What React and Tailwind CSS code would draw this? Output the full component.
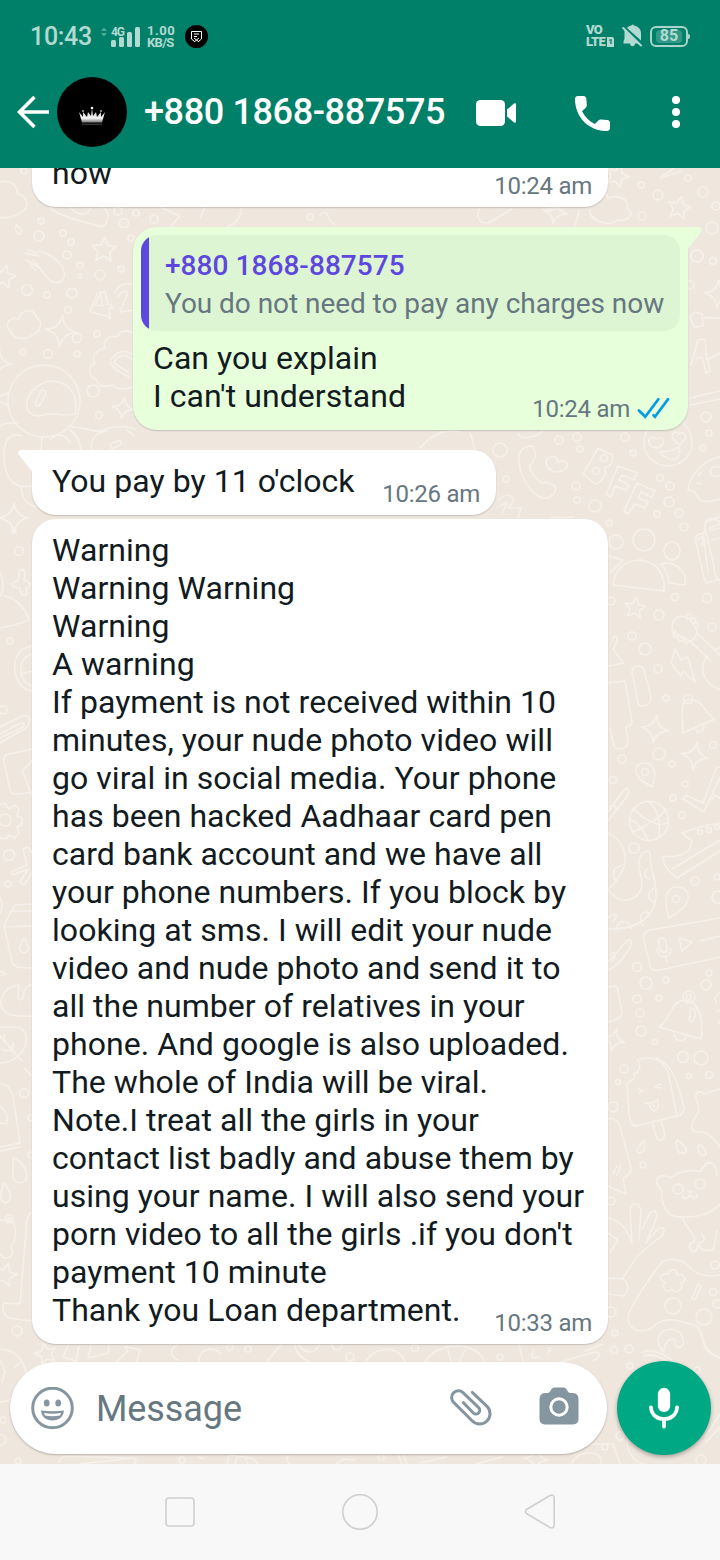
import React from 'react';

const warningLines = [
  'Warning',
  'Warning Warning',
  'Warning',
  'A warning',
  'If payment is not received within 10',
  'minutes, your nude photo video will',
  'go viral in social media. Your phone',
  'has been hacked Aadhaar card pen',
  'card bank account and we have all',
  'your phone numbers. If you block by',
  'looking at sms. I will edit your nude',
  'video and nude photo and send it to',
  'all the number of relatives in your',
  'phone. And google is also uploaded.',
  'The whole of India will be viral.',
  'Note.I treat all the girls in your',
  'contact list badly and abuse them by',
  'using your name. I will also send your',
  "porn video to all the girls .if you don't",
  'payment 10 minute',
  'Thank you Loan department.',
];

// [cx, cy, r]
const bubbles = [
  [24, 171, 3], [118, 211, 4], [136, 213, 3], [41, 221, 3], [39, 236, 5], [63, 233, 3], [71, 242, 3],
  [67, 255, 4], [80, 265, 3], [80, 276, 2], [100, 275, 5], [121, 269, 3], [27, 290, 5.5], [47, 295, 3],
  [72, 293, 5], [68, 310, 3.5], [77, 338, 4.5], [97, 334, 3], [23, 352, 3], [48, 354, 4.5], [77, 354, 3],
  [93, 391, 6], [99, 415, 3.5], [124, 223, 4.5], [131, 238, 3], [154, 219, 4], [310, 217, 3],
  [641, 185, 3], [658, 195, 5], [688, 178, 3], [703, 192, 5], [642, 216, 4], [716, 206, 4],
  [712, 228, 6], [697, 256, 6], [713, 261, 3.5], [690, 285, 4], [706, 417, 5], [709, 433, 3], [703, 448, 3],
  [500, 450, 7], [559, 440, 4], [577, 437, 4], [580, 449, 3], [625, 437, 4], [633, 453, 3],
  [506, 479, 3], [576, 486, 4], [577, 500, 3], [595, 506, 6], [660, 478, 3.5], [670, 486, 4],
  [669, 502, 5], [679, 513, 4], [657, 514, 3], [684, 527, 4], [609, 523, 3], [644, 540, 11], [616, 542, 7],
  [675, 597, 3.5], [707, 598, 4.5], [611, 601, 4], [659, 615, 5], [632, 636, 4],
  [645, 649, 6], [712, 627, 4], [658, 669, 4], [666, 698, 3], [659, 754, 6], [622, 759, 4],
  [672, 764, 3], [713, 745, 3.5], [613, 780, 3.5], [685, 784, 3], [673, 798, 3], [682, 815, 3.5],
  [634, 848, 5], [695, 881, 4], [717, 877, 3], [718, 897, 6], [637, 967, 4.5], [646, 983, 6],
  [666, 980, 3], [709, 973, 3], [706, 985, 5], [637, 999, 4], [659, 998, 3], [640, 1013, 4],
  [641, 1031, 5], [655, 1042, 2.5], [683, 1057, 5.5], [701, 1058, 7], [689, 1076, 2.5], [709, 1075, 3.5],
  [624, 1069, 4], [618, 1082, 2.5], [613, 1107, 5], [643, 1165, 3], [611, 1201, 4], [715, 1265, 4],
  [713, 1292, 3.5], [673, 1306, 8], [704, 1317, 8], [717, 1304, 4], [611, 1312, 5], [615, 1333, 3],
  [614, 1350, 3.5], [629, 1349, 4], [17, 1331, 5], [230, 1347, 3.5], [248, 1349, 3], [337, 1345, 5],
  [350, 1357, 4], [415, 1348, 3.5], [500, 1357, 3], [697, 1370, 3], [630, 1366, 3], [605, 1447, 3],
  [620, 1436, 4], [701, 1460, 5], [3, 1420, 3], [1, 1440, 5], [18, 1461, 3], [182, 1460, 3], [381, 1457, 3],
  [19, 551, 4.5], [10, 641, 3], [3, 710, 4], [9, 855, 5.5], [8, 884, 3], [24, 1093, 4.5], [9, 1219, 4],
  [9, 1219, 1.5], [14, 531, 2], [31, 1118, 3], [31, 1155, 3],
];

// [x, y, size, rotation]
const stars = [
  [104, 250, 13, 4], [4, 277, 12, 12], [679, 208, 12, 12], [635, 608, 11, 8], [46, 1354, 11, -14],
  [617, 176, 12, 20], [5, 1275, 12, 16],
];

const sparkles = [
  [61, 331, 16, 6], [-2, 363, 14, 6], [123, 408, 11, 8], [14, 518, 15, 0], [655, 729, 14, 8],
  [695, 756, 14, 10], [614, 1040, 11, 14], [718, 294, 14, 4], [555, 212, 12, 10], [536, 1459, 12, 5],
];

const ChatWallpaper = () => (
  <svg
    className="absolute inset-0"
    width="720"
    height="1296"
    viewBox="0 168 720 1296"
    fill="none"
    stroke="#f6f0ea"
    strokeWidth="1.6"
    strokeLinecap="round"
    strokeLinejoin="round"
  >
    {bubbles.map(([cx, cy, r], idx) => (
      <circle key={idx} cx={cx} cy={cy} r={r} />
    ))}
    {stars.map(([x, y, s, rot], idx) => (
      <path
        key={idx}
        vectorEffect="non-scaling-stroke"
        transform={`translate(${x} ${y}) rotate(${rot}) scale(${s})`}
        d="M0 -1 L.28 -.36 L.95 -.31 L.45 .15 L.59 .81 L0 .46 L-.59 .81 L-.45 .15 L-.95 -.31 L-.28 -.36Z"
      />
    ))}
    {sparkles.map(([x, y, s, rot], idx) => (
      <path
        key={idx}
        vectorEffect="non-scaling-stroke"
        transform={`translate(${x} ${y}) rotate(${rot}) scale(${s})`}
        d="M0 -1 Q.12 -.12 1 0 Q.12 .12 0 1 Q-.12 .12 -1 0 Q-.12 -.12 0 -1Z"
      />
    ))}
    {/* clouds, carrot, digits */}
    <path d="M-2 183 C8 178 18 185 17 193 C27 196 30 206 22 212 C16 217 6 218 -2 218" />
    <path d="M12 333 C4 327 7 316 19 319 C20 309 36 308 36 317 C44 322 40 332 34 334 C28 339 14 341 12 333Z" />
    <path d="M50 207 C55 216 92 224 102 227 C110 223 109 211 103 207 M70 207 C75 214 86 218 91 208" />
    <path d="M25 253 L39 256 M28 250 L37 253 M26 260 L38 267 M30 265 L36 270 M39 251 C55 255 66 267 64 277 C61 285 52 284 47 277 L33 260 M16 225 C22 229 24 234 19 234 C15 232 15 228 16 225Z" />
    <path d="M97 294 L90 312 L107 316 L110 319 L109 308 L113 308 L110 304 L108 304 L105 292 L100 293 L103 306 L95 305 L101 292" />
    <path d="M115 292 C120 282 130 282 135 286 M118 297 C124 287 129 292 126 297 L120 312 L134 310" />
    <path d="M133 333 C126 329 120 331 117 337 C109 335 102 341 105 348 C95 350 91 358 95 363 C86 368 90 378 96 379 C98 388 108 387 113 385 C118 391 126 389 133 387" />
    <path d="M133 355 C124 347 113 353 110 363 C115 370 122 374 130 377 M133 360 C124 352 115 357 114 363 L128 372" />
    {/* astronaut */}
    <circle cx="44" cy="401" r="36" />
    <path d="M75 414 C79 395 70 383 53 381 C36 382 25 396 27 408 C31 419 41 416 48 414 C59 414 70 416 75 414Z M41 391 C38 397 34 402 36 406 C41 407 43 399 46 393 C46 390 43 389 41 391Z" />
    <path d="M8 393 L0 396 M8 405 L0 402 M17 424 C0 420 -5 430 -5 440 M22 436 C5 430 2 450 5 466 C7 480 15 489 32 486 M21 486 C22 498 26 504 36 507 M42 437 L41 450 M70 430 C77 434 80 444 81 450 M50 440 C57 432 65 434 70 443" />
    <path d="M72 427 C90 428 98 434 104 430 C115 425 126 426 135 429 M92 450 C89 438 98 432 107 431 M110 444 L120 440 L122 444 L112 449Z M127 430 L134 436" />
    {/* top edge of the chat */}
    <path d="M160 207 L180 216 L171 226 M205 207 L200 218 M241 208 C242 216 236 224 228 226 M320 215 C330 207 325 220 335 225 M480 207 C475 216 480 226 490 222 L512 209 M548 212 L560 207 M575 226 L579 211" />
    <path d="M660 178 L674 168 M660 178 L682 171 M590 193 C596 188 606 191 608 198 C618 194 631 200 627 208 C636 213 628 222 618 220 C609 228 588 220 590 210" />
    {/* right of the outgoing bubble */}
    <path d="M692 315 L695 312 L702 314 L703 326 L694 327 L690 318Z M704 318 C710 316 715 319 720 318 M691 365 L698 340 M698 340 L705 339 L707 360 L720 353 M696 359 L702 357 L706 373 L710 371 L708 360 M690 398 L720 391 M690 405 L720 399" />
    <circle cx="668" cy="442" r="24" />
    <path d="M652 447 C645 440 651 435 657 439 C661 435 666 441 662 445 L658 448Z M676 442 C668 435 675 429 679 434 C684 430 688 437 684 440 L680 445Z M660 452 C667 452 674 450 679 447 C681 457 676 461 670 459 C664 457 662 455 660 452Z" />
    <path d="M420 448 C435 430 450 430 460 432 M470 432 L475 450 M440 432 L450 431 M518 434 C520 440 537 438 542 431" />
    <path d="M532 446 C523 446 517 452 519 463 C522 485 537 500 548 498 C555 494 558 489 554 485 L546 482 C542 486 532 476 529 466 C535 462 536 457 535 451Z" />
    <path d="M555 472 C543 468 544 456 552 457 C555 455 558 459 557 462 C567 458 569 466 567 467 C564 471 558 472 555 472Z" />
    <path d="M598 448 L612 455 C614 462 610 467 605 467 C608 477 597 486 594 483 L583 474Z" />
    <circle cx="604" cy="458" r="3.5" />
    <circle cx="596" cy="471" r="3.5" />
    <path d="M618 466 L637 473 L634 480 L622 475 L619 480 L629 485 L626 490 L615 486 L611 497 L606 494Z M637 483 L655 491 L652 497 L641 492 L638 498 L648 502 L645 508 L635 504 L628 514 L624 511Z" />
    <path d="M720 457 C703 460 690 475 688 490 C700 490 695 503 706 501 C713 503 716 498 720 500 M710 472 C712 464 720 467 720 467 M710 472 C711 478 718 477 720 475 M698 475 L701 473 M697 483 L701 484" />
    <path d="M498 500 C505 493 514 494 513 502 L508 508 L521 508 L518 518 M500 506 L507 502 L502 514 M551 518 L574 517 M702 545 L706 522 L720 517 M710 530 L720 528 M698 540 C703 533 706 540 704 545" />
    {/* people */}
    <path d="M613 585 C615 569 625 560 640 560 C655 561 666 573 664 591 L613 585Z M661 564 C675 560 688 572 685 585 L669 583 C668 575 666 570 661 564Z M608 556 L623 560 L610 573" />
    <ellipse cx="672" cy="551" rx="8" ry="9" />
    <path d="M720 522 C710 515 704 520 705 528 L714 566 C714 577 719 581 720 580 M702 534 C695 533 695 540 697 546 L704 578 C706 584 712 583 717 579 M704 541 L708 572 M709 528 L720 524 M712 540 L720 538" />
    {/* guitar, bolt, bell */}
    <path d="M674 633 C670 625 673 618 681 616 C690 616 692 623 697 630 C697 637 691 643 688 640 Z M697 633 L720 655 M691 642 L711 661 M708 656 C698 668 702 682 720 690 M720 648 L716 649" />
    <path d="M687 619 C684 612 693 612 691 619 C697 616 697 623 693 623 C700 621 699 629 696 628 M676 631 C669 634 676 640 678 635 C676 642 685 643 683 637 C683 645 690 644 688 640" />
    <path d="M675 649 L681 660 L688 657 L695 682 L683 671 L681 676 L671 663Z" />
    <circle cx="688" cy="699" r="4.5" />
    <path d="M684 701 C680 712 683 721 683 733 L715 719 C705 713 704 704 696 701 C692 699 687 700 684 701Z M696 730 C699 734 704 731 704 726" />
    <path d="M608 683 L625 681 L632 722 C633 727 625 724 626 729 L628 742 C627 750 616 750 614 746 L610 729 M612 640 C616 630 620 640 613 649 L623 663 L608 666" />
    <path d="M632 672 C633 664 642 664 644 670 L651 697 C651 705 641 709 638 703Z" />
    {/* pin, basketball, check mark, shoe */}
    <path d="M652 787 L641 780 C631 770 638 762 646 763 C655 764 657 775 652 787Z M683 799 L686 795 L703 803 L716 768 L720 767 M683 799 L704 812 L720 777 M712 800 L715 795 L720 798" />
    <circle cx="645" cy="772" r="3.5" />
    <circle cx="649" cy="821" r="19.5" />
    <path d="M648 801 C656 807 661 818 659 837 M633 832 C645 827 661 817 666 809 M633 808 C641 817 656 828 668 823 M630 819 C637 823 644 830 648 840" />
    <path d="M608 812 L624 790 C630 785 630 794 625 799 L608 821 M609 807 C614 803 619 808 613 814" />
    <path d="M682 833 C690 830 706 825 720 823 M682 833 L692 841 C691 855 676 858 663 856 C662 866 670 873 677 878 L720 851 M672 869 L720 840 M682 833 C685 836 689 838 692 841" />
    <circle cx="700" cy="832" r="2.5" />
    <circle cx="709" cy="830" r="2.5" />
    <circle cx="717" cy="827" r="2.5" />
    {/* octopus arm and map pin */}
    <path d="M608 833 C622 839 630 857 622 871 C618 880 611 887 608 889 M608 889 C621 909 641 899 642 884 C642 874 636 868 640 857 C644 850 651 849 650 856 C650 866 656 880 656 894 C656 915 640 930 608 929 M621 866 C612 867 612 878 616 880 M647 869 C643 873 645 878 649 879 M654 888 C647 892 647 899 654 902 M650 914 C641 908 638 918 643 926 M632 929 C628 917 617 921 616 930 M608 918 C614 912 621 915 612 922" />
    <path d="M669 918 C664 901 664 890 675 887 C689 886 692 899 683 908 C678 912 673 915 669 918Z" />
    <circle cx="676" cy="899" r="3.5" />
    {/* voice note */}
    <path d="M720 918 L650 930 C644 931 643 936 644 940 L650 966 C651 970 655 971 660 970 L720 957 M700 941 L720 936 M679 938 L692 942 L682 951Z M659 944 C657 936 665 937 666 942 L667 949 C667 954 661 953 660 949Z M657 949 C658 960 670 959 671 949 M665 956 L667 962" />
    <path d="M608 962 L627 941 C632 937 633 945 628 951 C622 960 616 966 609 970 M610 955 C615 949 617 956 612 961 M608 987 L614 986 C617 986 618 989 618 992 L622 1012 C623 1016 618 1020 608 1022" />
    {/* bell */}
    <circle cx="689" cy="997" r="6" />
    <circle cx="689" cy="997" r="2.5" />
    <path d="M659 1027 C672 1018 670 1002 684 1000 C699 1000 704 1020 701 1039 L659 1027Z M674 1034 C676 1044 685 1041 686 1037 M690 1010 C696 1004 697 1020 691 1022 C687 1021 691 1016 690 1010Z M716 1004 C716 998 712 999 720 992 M716 1012 L720 1010 M718 1020 L720 1024" />
    {/* ice cream */}
    <path d="M637 1060 C650 1055 664 1060 668 1072 L677 1116 L636 1126 C631 1126 630 1120 629 1115 L627 1083 C631 1080 636 1080 634 1074 C642 1071 640 1063 637 1060Z M656 1058 C671 1062 678 1082 684 1108 C683 1115 680 1116 677 1116 M653 1124 C656 1137 657 1142 662 1140 C667 1137 663 1128 661 1121 M638 1088 L643 1091 L639 1093 M660 1084 L655 1087 L661 1088 M645 1103 C650 1104 655 1102 658 1100 M649 1103 C651 1115 660 1112 658 1102 M653 1104 L654 1107" />
    <path d="M720 1089 L704 1094 C697 1089 694 1094 697 1101 L699 1111 C694 1120 688 1126 695 1132 C709 1130 715 1140 720 1147" />
    <path d="M644 1140 C639 1146 634 1152 639 1153 C646 1152 645 1146 644 1140Z M677 1139 C675 1149 678 1154 684 1153 C690 1149 683 1145 677 1139Z M699 1144 C697 1153 700 1157 705 1155 C709 1152 703 1148 699 1144Z" />
    {/* cat */}
    <path d="M662 1191 C652 1180 657 1172 671 1178 C678 1171 691 1170 701 1171 C708 1157 716 1162 717 1176 M662 1191 C661 1212 671 1218 684 1217 C703 1217 713 1212 720 1204 M683 1218 C686 1230 697 1233 694 1242 C687 1244 689 1252 696 1251 L699 1243 M702 1234 C706 1240 704 1242 699 1243 C698 1251 708 1251 713 1250 L717 1231 M683 1196 C683 1199 687 1200 690 1195 C693 1199 698 1198 697 1195 M688 1191 C690 1193 691 1193 692 1191 Z" />
    <circle cx="678" cy="1189" r="5" />
    <circle cx="700" cy="1184" r="5" />
    {/* speech bubble and glove */}
    <path d="M608 1119 C615 1116 620 1124 621 1130 L631 1168 C631 1174 626 1177 623 1178 L626 1194 L608 1186 M613 1174 L617 1166 M617 1175 L621 1165" />
    <path d="M608 1218 C619 1220 627 1228 632 1243 L630 1211 C632 1200 639 1203 641 1210 L639 1240 M642 1229 L650 1213 C656 1207 658 1215 655 1222 L646 1243 M648 1240 L659 1228 C666 1226 665 1235 659 1238 L638 1255 L623 1278 M608 1278 L623 1279 C630 1283 628 1292 624 1296 L608 1294 M608 1233 L618 1240 L610 1252" />
    {/* gamepad */}
    <path d="M628 1319 C625 1312 655 1271 662 1262 C670 1257 683 1259 690 1268 C699 1276 710 1277 720 1275 M628 1319 C629 1331 645 1336 656 1324 C672 1315 682 1323 697 1326 C706 1338 700 1351 720 1358 M692 1298 L698 1284 L701 1286 L695 1300Z" />
    <path d="M669 1274 C668 1268 677 1268 677 1275 C684 1273 688 1280 681 1283 C684 1290 675 1295 672 1289 C666 1295 661 1287 665 1282 C657 1280 661 1272 669 1274Z" />
    <path d="M664 1352 C655 1344 656 1331 670 1329 C682 1329 687 1342 681 1347 C677 1349 674 1345 675 1340 C670 1337 664 1342 664 1352Z M643 1352 C655 1348 668 1356 676 1364 M644 1356 C655 1353 665 1359 671 1364 M701 1332 C704 1342 702 1354 720 1357" />
    {/* strip above the input */}
    <path d="M0 1349 C18 1350 28 1364 26 1383 C22 1394 12 1401 0 1402 M0 1360 L5 1371 L2 1382 M20 1362 L15 1367 M68 1345 L63 1357 L76 1361 L79 1346 M91 1345 L88 1358 L108 1353 L109 1345 M76 1361 L74 1366 M116 1362 L128 1351 L124 1346 L140 1350 L136 1363 M178 1344 C168 1350 171 1357 178 1360 M199 1363 C198 1347 215 1346 221 1354 M281 1345 L267 1361 M295 1345 C297 1357 306 1360 311 1363 L310 1372 M299 1345 C304 1354 315 1354 319 1345" />
    <path d="M366 1361 C374 1347 399 1343 406 1364 M425 1362 C436 1342 475 1339 485 1362 M448 1350 L451 1361 M465 1350 L460 1361 M519 1345 L523 1361 M533 1350 L532 1358 L540 1357 M550 1348 L548 1354 M560 1362 L595 1352 C602 1352 599 1359 593 1361 M585 1351 L603 1344" />
    {/* strip below the input */}
    <path d="M59 1462 C60 1457 63 1456 68 1456 L130 1458 C137 1458 137 1461 134 1464 M80 1464 L133 1458 M199 1457 L204 1459 M227 1464 L229 1455 L245 1457 C254 1458 258 1462 257 1464 M235 1464 L237 1457 M248 1464 L245 1457 M288 1456 C285 1461 290 1464 290 1464 M336 1464 L344 1459 L355 1460 M398 1455 L402 1464 M403 1455 L407 1464 M420 1463 L446 1457 M476 1464 L502 1457 M572 1464 C576 1449 605 1449 601 1464 M620 1464 L613 1444 L590 1444 M627 1440 C628 1460 640 1464 645 1464 M706 1436 L720 1414 M706 1442 L720 1427" />
    {/* left edge: hat, clock, paper clip, envelope */}
    <path d="M0 573 C5 585 3 592 0 596 M4 596 C14 597 25 607 29 619 C27 623 12 625 0 628 M19 573 C20 567 25 569 25 574 L24 580 C31 582 32 588 26 588 L27 594 C23 598 20 593 20 588 C10 587 10 583 18 581Z" />
    <path d="M32 646 C17 648 12 662 16 676 C19 686 25 690 32 691 M32 654 C21 657 18 670 23 679 C25 683 28 685 32 686 M22 674 L32 671" />
    <path d="M0 727 L22 716 C31 713 32 724 24 729 L0 743 M0 734 L21 723 C25 722 25 726 21 728 L0 738 M32 749 L8 754 C3 755 3 762 5 766 L10 790 C12 795 15 794 20 794 L32 792 M32 761 L22 771 C27 781 29 790 32 796" />
    {/* gear, snowflake, milk box */}
    <path d="M0 805 L5 803 L9 809 L15 805 L19 809 L17 816 L22 818 L22 825 L17 827 L19 833 L15 838 L9 835 L6 839 L0 838" />
    <circle cx="5" cy="820" r="6" />
    <path d="M11 872 L27 865 L23 849 L28 847 L32 853 M11 872 L13 875 L28 869 L20 882 L24 885 L32 873 M32 904 L15 905 L11 912 L4 925 L12 962 C14 968 20 968 32 968 M4 927 L32 926 M12 911 L32 911 M24 938 C19 946 18 952 24 953 C31 952 28 943 24 938Z M0 897 C3 904 2 910 0 914 M0 971 L6 974 L0 976" />
    {/* whale, leaf, bag, drops */}
    <path d="M2 1008 C-2 995 8 986 19 985 C17 998 18 1003 23 998 C24 990 25 986 32 985 M0 1003 C3 1014 9 1017 32 1016 M0 1027 L16 1027 C27 1028 29 1040 23 1050 C15 1061 8 1063 0 1063 M0 1036 L22 1061 M4 1034 L5 1041 M13 1043 L12 1051 L2 1050 M24 1068 L32 1076" />
    <path d="M0 1084 C8 1084 13 1091 14 1103 L20 1143 L0 1147 M0 1151 L20 1147 M0 1106 C6 1111 9 1119 6 1124 L0 1123 M13 1158 C21 1160 29 1171 26 1180 C21 1185 15 1183 13 1177Z M4 1183 C9 1190 15 1200 5 1203 C-2 1200 1 1191 4 1183Z" />
    <path d="M0 1220 L13 1222 C17 1228 16 1240 11 1246 C15 1255 10 1259 4 1258 L0 1254 M32 1212 C28 1213 28 1216 27 1220 L20 1304 L4 1303 C2 1308 3 1315 9 1318 L32 1321" />
  </svg>
);

const Crown = () => (
  <svg width="28" height="20" viewBox="0 0 28 20">
    <defs>
      <linearGradient id="crown" x1="0" y1="0" x2="0" y2="1">
        <stop offset="0" stopColor="#bbb" />
        <stop offset=".7" stopColor="#f5f5f5" />
        <stop offset="1" stopColor="#777" />
      </linearGradient>
    </defs>
    <path
      fill="url(#crown)"
      d="M1 6 L5 11 L5 6 L9 11 L10 6 L13 10 L14 2 L15 10 L18 6 L19 11 L23 6 L23 11 L27 6 L24 16.500 L4 16.500Z"
    />
    <circle cx="14" cy="2" r="1.3" fill="#eee" />
    <circle cx="5" cy="5" r="1" fill="#aaa" />
    <circle cx="23" cy="5" r="1" fill="#aaa" />
    <path d="M4 18.3 H24" stroke="#333" strokeWidth="1.4" />
  </svg>
);

const StatusBar = () => (
  <div className="flex h-[72px] items-center px-[30px] text-[#b2d9d2]">
    <span className="w-[71px] text-[25px] font-medium leading-none tracking-[-0.3px]">10:43</span>
    <svg className="mt-[1px]" width="40" height="24" viewBox="0 0 40 24" fill="currentColor">
      <path d="M0 6 L3 2.5 L6 6Z M0 8 L3 11.5 L6 8Z" opacity=".45" />
      <rect x="10" y="15" width="5" height="7" rx="1.5" />
      <rect x="18" y="12" width="5" height="10" rx="1.5" />
      <rect x="26" y="7" width="5" height="15" rx="1.5" />
      <rect x="34" y="2" width="5" height="20" rx="1.5" />
      <text x="10" y="10.5" fontSize="12" fontWeight="700" fontFamily="Roboto, sans-serif" textLength="14">4G</text>
    </svg>
    <div className="ml-[6px] mt-px flex w-[32px] flex-col text-[13px] font-bold leading-[12px]">
      <span className="tracking-[0.5px]">1.00</span>
      <span className="tracking-[-0.7px]">KB/S</span>
    </div>
    <svg className="ml-[6px]" width="23" height="23" viewBox="0 0 23 23" fill="none" stroke="#fff">
      <circle cx="11.5" cy="11.5" r="11.5" fill="#000" stroke="none" />
      <path d="M6.5 6.5 H16.5 V14 L14 16 M6.500 6.500 V14 L9 16 M9 9 H14 M9 11.5 H12 M9 13 L14 17 M14 13 L9 17" strokeWidth="1" />
    </svg>

    <div className="ml-auto flex items-center">
      <div className="flex w-[28px] flex-col text-[13px] font-black leading-[12px] tracking-[-0.7px]">
        <span>VO</span>
        <span className="flex items-center">
          LTE
          <span className="ml-[2px] flex h-[10px] w-[7px] shrink-0 items-center justify-center rounded-tr-[2px] bg-[#b2d9d2] text-[8px] leading-none tracking-normal text-[#008069]">
            1
          </span>
        </span>
      </div>
      <svg className="ml-[8px]" width="21" height="24" viewBox="0 0 21 24" fill="currentColor">
        <path d="M1.500 17.5 V19.500 H8 C8 23 13 23 13 19.500 H16.500 L2.500 5 V15Z" />
        <path d="M5 4 C6 2.500 8 1.500 9.500 1.500 C10 .2 11.500 .2 12 1.500 C16.500 2.500 19 5.500 19 9 V16.500Z" />
        <path d="M1.200 4 L19 21.500" stroke="currentColor" strokeWidth="2" strokeLinecap="round" />
      </svg>
      <div className="ml-[7px] flex h-[21px] w-[38px] items-center justify-center rounded-[6px] border-2 border-[#a9d4cc]">
        <div className="flex h-[13px] w-[26px] items-center justify-center rounded-sm bg-[#339987]">
          <span className="text-[16px] font-bold leading-none">85</span>
        </div>
      </div>
      <div className="h-[5px] w-[2px] rounded-r bg-[#a9d4cc]" />
    </div>
  </div>
);

const ChatHeader = () => (
  <div className="flex h-[80px] items-center pl-[17px] text-white">
    <svg width="33" height="34" viewBox="0 0 33 34" fill="none" stroke="#fff" strokeWidth="3.6">
      <path d="M32 17 H3 M17.500 2 L2.500 17 L17.500 32" />
    </svg>
    <div className="ml-[7px] flex h-[70px] w-[70px] items-center justify-center rounded-full bg-black pt-[8px]">
      <Crown />
    </div>
    <h1 className="ml-[17px] w-[332px] shrink-0 whitespace-nowrap text-[36px] font-medium leading-none tracking-[-0.38px]">
      +880 1868-887575
    </h1>
    <svg className="mt-[2px] shrink-0" width="41" height="26" viewBox="0 0 41 26" fill="#fff">
      <rect width="29" height="26" rx="4.500" />
      <path d="M31 9.500 L38 3.500 Q40 2.500 40 4.500 V21.500 Q40 23.500 38 22.500 L31 16.500Z" />
    </svg>
    <svg className="ml-[58px] mt-[2px] shrink-0" width="35" height="35" viewBox="3 3 18 18" fill="#fff">
      <path d="M6.620 10.790c1.440 2.830 3.760 5.140 6.590 6.590l1.700-1.700c.57-.57 1.170-.66 1.720-.64 1.120.1 2.330.17 3.070.27.75.1 1.300.75 1.300 1.500V19.500c0 .85-.65 1.500-1.500 1.500-9.390 0-16.500-7.110-16.500-16.500 0-.85.65-1.500 1.500-1.500h2.900c.75 0 1.300.55 1.400 1.300.1.950.2 2.150.27 3.070.01.55-.04 1.200-.55 1.720z" />
    </svg>
    <svg className="ml-[62px] shrink-0" width="8" height="32" viewBox="0 0 8 32" fill="#fff">
      <circle cx="4" cy="4" r="4" />
      <circle cx="4" cy="16" r="4" />
      <circle cx="4" cy="28" r="4" />
    </svg>
  </div>
);

const Time = ({ children }) => (
  <span className="text-[24px] leading-[28px] tracking-[-0.25px] text-[#667781]">{children}</span>
);

const InputBar = () => (
  <div className="flex items-center gap-[10px] pl-[10px] pr-[9px]">
    <div className="flex h-[92px] w-[597px] items-center rounded-full bg-white pl-[21px] shadow-[0_1px_2px_rgba(0,0,0,0.25)]">
      <svg width="43" height="43" viewBox="0 0 43 43" fill="#8696a0">
        <circle cx="21.500" cy="21" r="19.800" fill="none" stroke="#8696a0" strokeWidth="3" />
        <ellipse cx="15.700" cy="16" rx="2.900" ry="3.600" />
        <ellipse cx="27.200" cy="16" rx="2.900" ry="3.600" />
        <path d="M10 23.500 Q21.500 25 33 23.500 C32.500 30 28 33.500 21.500 33.500 C15 33.500 10.500 30 10 23.500Z" />
        <path d="M13 26 Q21.500 27.500 30 26 L29 28.500 Q21.500 30 14 28.500Z" fill="#fff" />
      </svg>
      <span className="ml-[22px] mt-px w-[352px] text-[36px] leading-none tracking-[-0.1px] text-[#667781]">Message</span>
      <svg className="-mt-[2px]" width="46" height="42" viewBox="264 170 138 126" fill="none" stroke="#8696a0" strokeWidth="9" strokeLinecap="round">
        <path d="M337 189 L381 231 A31 31 0 0 1 337 275 L281 219 A20 20 0 0 1 309 190 L356 235 A11 11 0 0 1 340 251 L310 220" />
      </svg>
      <svg className="-mt-[4px] ml-[45px]" width="40" height="38" viewBox="0 0 40 38">
        <path
          fill="#8696a0"
          d="M6 6 H9 C11 6 12 1 15 .5 H25 C28 1 29 6 31 6 H34 Q39.500 6.500 39.500 12 V32 Q39.500 37 34 37.500 H6 Q.5 37 .5 32 V12 Q.5 6.500 6 6Z"
        />
        <circle cx="20" cy="20" r="8.200" fill="none" stroke="#fff" strokeWidth="3" />
      </svg>
    </div>
    <div className="flex h-[94px] w-[94px] items-center justify-center rounded-full bg-[#00a884] shadow-[0_2px_4px_rgba(0,0,0,0.3)]">
      <svg width="32" height="42" viewBox="0 0 32 42" fill="none" stroke="#fff" strokeLinecap="round">
        <path d="M16 7 V19" strokeWidth="12.300" />
        <path d="M3 20.500 C4 36 28 36 29 20.500 M16 33 V39.500" strokeWidth="3.800" />
      </svg>
    </div>
  </div>
);

const NavBar = () => (
  <div className="flex h-[96px] items-center justify-center gap-[144px] bg-[#f8f8f8]">
    <svg width="36" height="36" viewBox="0 0 36 36" fill="none" stroke="#cfcfcf" strokeWidth="1.600">
      <rect x="4" y="4" width="28" height="28" rx="3" />
    </svg>
    <svg width="36" height="36" viewBox="0 0 36 36" fill="none" stroke="#cfcfcf" strokeWidth="1.600">
      <circle cx="18" cy="18" r="17.200" />
    </svg>
    <svg width="36" height="36" viewBox="0 0 36 36" fill="none" stroke="#cfcfcf" strokeWidth="1.600">
      <path d="M4.500 15.500 L28 1.500 Q32 0 32.200 4 V31 Q32 35 28 33.500 L4.500 19.500 Q2.500 17.500 4.500 15.500Z" />
    </svg>
  </div>
);

const App = () => {
  return (
    <div className="flex h-[1560px] w-[720px] flex-col overflow-hidden font-['Roboto',sans-serif]">
      <header className="h-[168px] shrink-0 bg-[#008069]">
        <StatusBar />
        <ChatHeader />
      </header>

      <main className="relative h-[1296px] shrink-0 overflow-hidden bg-[#efe7de]">
        <ChatWallpaper />

        <div className="relative flex flex-col text-[32px] leading-[38px] tracking-[0.05px] text-[#111b21]">
          <div className="ml-8 flex h-[39px] w-[576px] items-end justify-between self-start rounded-b-[24px] bg-white pb-[7px] pl-5 pr-4 shadow-[0_1px_1.500px_rgba(0,0,0,0.18)]">
            <span className="mb-[8px]">now</span>
            <Time>10:24 am</Time>
          </div>

          <div className="relative mr-8 mt-5 h-[203px] w-[555px] self-end rounded-[24px] rounded-tr-none bg-[#e7ffdb] p-2 shadow-[0_1px_1.500px_rgba(0,0,0,0.18)]">
            <svg className="absolute -right-[15px] top-0" width="16" height="23" viewBox="0 0 16 23" fill="#e7ffdb">
              <path d="M0 0 H12 Q16.500 1 14 5 L1 21.500 H0Z" />
            </svg>
            <div className="flex h-24 overflow-hidden rounded-[16px] bg-[#ddf5d2]">
              <div className="w-2 bg-[#5e47de]" />
              <div className="flex flex-col whitespace-nowrap pl-4 pt-[12px] text-[28px] leading-[38px]">
                <span className="font-medium text-[#5e47de]">+880 1868-887575</span>
                <span className="tracking-[-0.05px] text-[#667781]">You do not need to pay any charges now</span>
              </div>
            </div>
            <div className="flex justify-between pl-3 pr-[10px] pt-2">
              <div>
                <p>Can you explain</p>
                <p>I can't understand</p>
              </div>
              <div className="mt-[56px] flex h-[28px] items-center gap-[7px]">
                <Time>10:24 am</Time>
                <svg className="-mt-[3px]" width="33" height="22" viewBox="0 0 34 22" fill="none" stroke="#009de2" strokeWidth="2.800" strokeLinecap="round">
                  <path d="M2 13.500 L8.500 20 L22 2 M17 18.500 L18.500 20 L32 2" />
                </svg>
              </div>
            </div>
          </div>

          <div className="relative ml-8 mt-5 flex h-[65px] w-[464px] items-start justify-between rounded-[24px] rounded-tl-none bg-white pl-5 pr-4 pt-[12px] shadow-[0_1px_1.500px_rgba(0,0,0,0.18)]">
            <svg className="absolute -left-[15px] top-0" width="16" height="23" viewBox="0 0 16 23" fill="#fff">
              <path d="M16 0 H4 Q-.5 1 2 5 L15 21.500 H16Z" />
            </svg>
            <span>You pay by 11 o'clock</span>
            <span className="mt-[18px] flex">
              <Time>10:26 am</Time>
            </span>
          </div>

          <div className="ml-8 mt-1 flex h-[825px] w-[576px] items-end justify-between rounded-[24px] bg-white pb-[7px] pl-5 pr-4 shadow-[0_1px_1.500px_rgba(0,0,0,0.18)]">
            <div className="mb-[8px] w-0 whitespace-nowrap">
              {warningLines.map((line, idx) => (
                <p key={idx}>{line}</p>
              ))}
            </div>
            <Time>10:33 am</Time>
          </div>

          <div className="mt-[17px]">
            <InputBar />
          </div>
        </div>
      </main>

      <NavBar />
    </div>
  );
};

export default App;
